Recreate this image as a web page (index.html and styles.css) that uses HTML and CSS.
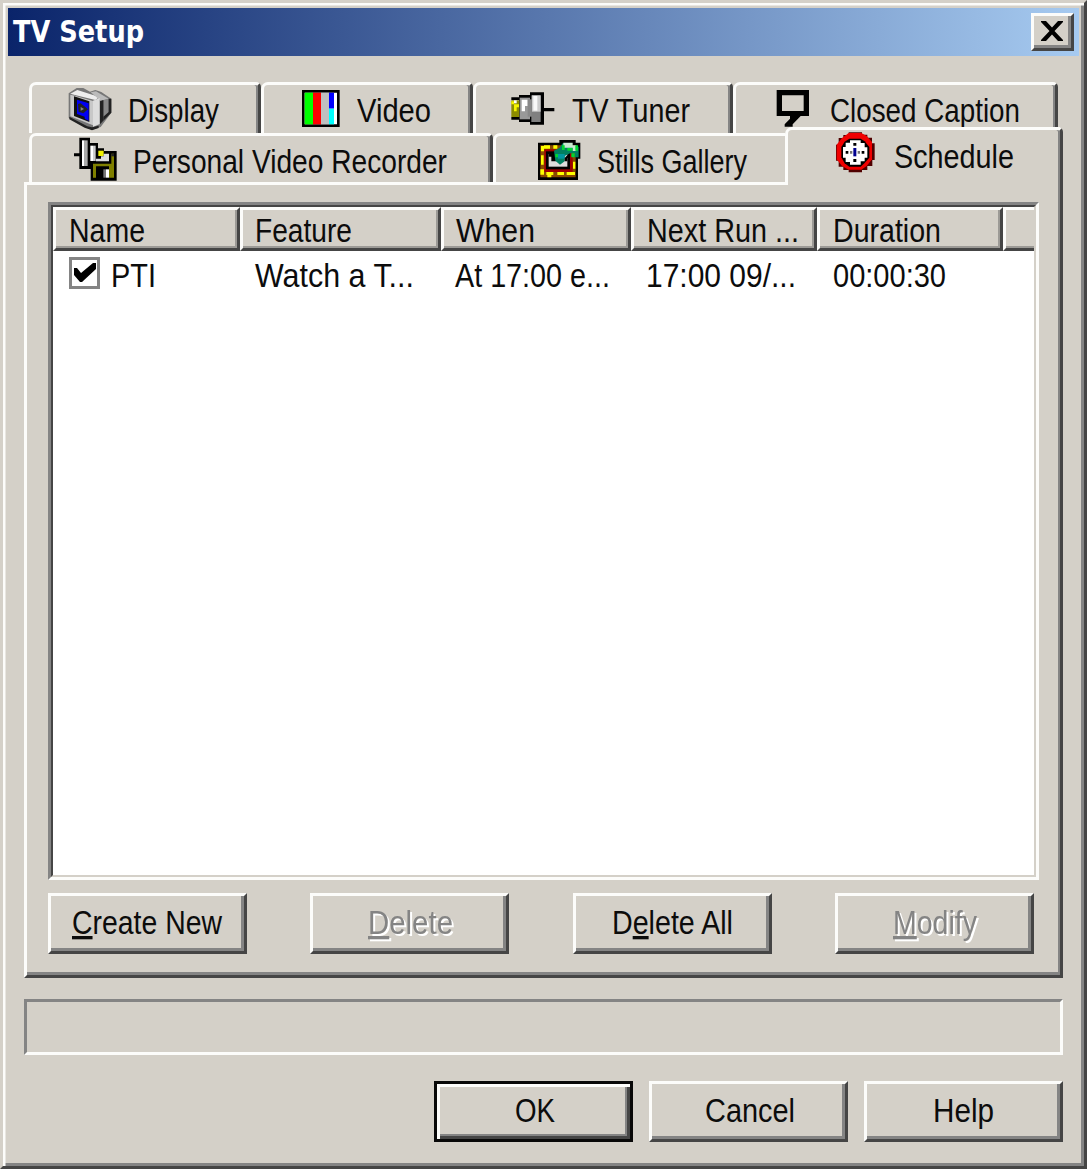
FILE: index.html
```html
<!DOCTYPE html>
<html lang="en">
<head>
<meta charset="utf-8">
<title>TV Setup</title>
<link rel="stylesheet" href="styles.css">
</head>
<body>
<main class="window">
  <header class="titlebar">
    <svg class="label title" width="131" height="44"><text x="0" y="34" textLength="131" lengthAdjust="spacingAndGlyphs">TV Setup</text></svg>
    <button class="close" aria-label="Close">
      <svg width="22" height="20" viewBox="0 0 22 20"><path d="M0 0H5L11 6.5L17 0H22V1L13.5 10L22 19V20H17L11 13.5L5 20H0V19L8.500 10L0 1Z"/></svg>
    </button>
  </header>

  <nav class="tabs">
    <div class="tab-row">
      <div class="tab t-display">
        <svg class="icon" viewBox="204 261 132 132">
          <path d="M206 280L230 264L250 264L270 275L286 270L304 276L334 296V338L302 381L276 389L256 382L206 353Z" fill="#777"/>
          <path d="M211 281L232 270L298 291L286 300L222 284Z" fill="#eee"/>
          <path d="M272 277L288 274L326 296L302 302Z" fill="#bbb"/>
          <path d="M211 284L224 287L279 303V376L211 349Z" fill="#c8c8c8"/>
          <path d="M279 302L299 294V372L279 381Z" fill="#ddd"/>
          <path d="M300 304L310 300V362L300 373Z" fill="#222"/><path d="M312 300L325 297V344L312 359Z" fill="#888"/>
          <path d="M326 296H334V338L310 362V350L326 336Z" fill="#222"/>
          <path d="M208 350L262 379L276 382L296 377V384L276 391L254 383L208 358Z" fill="#222"/>
          <path d="M222 289L268 304V366L222 348Z" fill="#111"/><path d="M231 299L266 310V362L254 356V350L231 342Z" fill="#0000f4"/>
          <path d="M234 312L242 310L256 321L264 328L250 340L236 335Z" fill="#222"/><path d="M242 321L252 327L242 332Z" fill="#888"/>
        </svg>
        <svg class="label" width="93" height="44"><text x="1" y="35" textLength="91" lengthAdjust="spacingAndGlyphs">Display</text></svg>
      </div>
      <div class="tab t-video">
        <svg class="icon" viewBox="78 51 132 132">
          <path d="M96 60H209V171H96Z"/><path d="M104 68H201V163H104Z" fill="#fff"/>
          <path d="M104 68H129V163H104Z" fill="#0f0"/><path d="M129 68H153V163H129Z" fill="#f00"/>
          <path d="M153 68H177V163H153Z" fill="#c0c0c0"/><path d="M177 68H192V116H177Z" fill="#00f"/><path d="M177 116H192V163H177Z" fill="#0ff"/>
        </svg>
        <svg class="label" width="76" height="44"><text x="2" y="35" textLength="74" lengthAdjust="spacingAndGlyphs">Video</text></svg>
      </div>
      <div class="tab t-tuner">
        <svg class="icon" viewBox="33 51 132 132">
          <path d="M34 82H57V75H90V67H132V114H163V124H132V164H90V156H57V149H34V141H57V90H34Z"/>
          <path d="M34 91H58V141H34Z" fill="#8c8c00"/><path d="M34 94H42V103H34ZM42 103H57V112H50V124H42Z" fill="#f6f600"/><path d="M42 91H50V100H42Z" fill="#fff"/>
          <path d="M59 83H90V148H59Z" fill="#999"/><path d="M65 89H83V108H75V124H65Z" fill="#fff"/><path d="M83 88H96V140H83Z" fill="#888"/>
          <path d="M94 76H122V156H94Z" fill="#808080"/><path d="M96 76H122V125H96Z" fill="#ccc"/><path d="M100 78H112V122H100Z" fill="#f8f8f8"/>
        </svg>
        <svg class="label" width="121" height="44"><text x="2" y="35" textLength="118" lengthAdjust="spacingAndGlyphs">TV Tuner</text></svg>
      </div>
      <div class="tab t-cc">
        <svg class="icon" viewBox="30 51 132 132">
          <path fill-rule="evenodd" d="M50 60H147V138H122L98 163V170H74V163L90 146V138H50ZM66 76V123H131V76Z"/>
        </svg>
        <svg class="label" width="191" height="44"><text x="1" y="35" textLength="190" lengthAdjust="spacingAndGlyphs">Closed Caption</text></svg>
      </div>
    </div>
    <div class="tab-row second">
      <div class="tab t-pvr">
        <svg class="icon" viewBox="219 411 132 132">
          <path d="M238 413H270V429H294V445H312V453H350V542H272V507H238V469H222V460H238Z"/>
          <path d="M246 421H254V498H246Z" fill="#fff"/><path d="M254 421H263V498H254Z" fill="#aaa"/>
          <path d="M271 437H279V483H271Z" fill="#fff"/><path d="M279 437H287V483H279Z" fill="#ccc"/>
          <path d="M295 452H311V468H295Z" fill="#f0f000"/><path d="M311 461H327V484H288V476H303V469H311Z" fill="#ddd"/>
          <path d="M279 491H288V533H279ZM334 461H342V533H334ZM288 491H334V499H288ZM327 499H334V533H327Z" fill="#808000"/>
          <path d="M318 508H327V533H318Z" fill="#fff"/><path d="M310 508H318V533H310Z" fill="#777"/><path d="M334 461H342V469H334Z" fill="#222"/>
        </svg>
        <svg class="label" width="315" height="44"><text x="1" y="36" textLength="314" lengthAdjust="spacingAndGlyphs">Personal Video Recorder</text></svg>
      </div>
      <div class="tab t-stills">
        <svg class="icon" viewBox="111 201 132 132">
          <path d="M114 218H178V210H227V218H241V266H234V330H114Z"/>
          <path d="M121 226H227V322H121Z" fill="#8a4a00"/>
          <path d="M123 228H132V244H123ZM132 226H150V236H132ZM160 226H172V236H160ZM123 256H131V284H123ZM121 298H132V314H121ZM139 306H160V315H139ZM172 306H192V315H172ZM200 306H225V315H200ZM219 275H226V296H219ZM142 315H154V322H142Z" fill="#ff0"/>
          <path d="M133 238H218V306H133Z" fill="#a00000"/><path d="M138 244H210V298H138Z" fill="#000"/><path d="M146 252H202V290H146Z" fill="#ddd"/>
          <path d="M146 246H162L170 258V274H154V260H146Z"/>
          <path d="M162 242L178 234L188 220H202L210 230H236V262H224V250H210L194 258V274L180 284L166 272Z" fill="#008060"/>
          <path d="M190 218H218V226H229V243H218V233H190Z" fill="#c8e8d0"/><path d="M202 234H217V242H202ZM226 226H234V242H226ZM186 226H194V240H186ZM166 252H174V262H166ZM214 250H224V262H214Z" fill="#00d830"/>
          <path d="M174 252H194V266H174Z" fill="#0098a0"/><path d="M194 264L202 256H210V264H202V274H194Z"/>
        </svg>
        <svg class="label" width="151" height="44"><text x="1" y="36" textLength="150" lengthAdjust="spacingAndGlyphs">Stills Gallery</text></svg>
      </div>
      <div class="tab active t-schedule">
        <svg class="icon" viewBox="222 186 132 132">
          <path d="M266 187H306V194H322V203H336V220H344V270H337V288H322V300H306V307H266V300H250V290H236V272H228V224H236V204H250V195H266Z" fill="#500000"/>
          <path d="M266 189H304L320 198L336 216V268L320 288L304 299H266L246 288L230 268V224L246 204Z" fill="#f00000"/>
          <path d="M268 206H302L314 214L328 231V263L313 280L302 290H268L254 280L244 262V231L254 215Z"/>
          <path d="M270 211H302V219H314V232H322V263H314V274H302V284H270V276H257V263H249V231H257V218H270Z" fill="#fff"/>
          <path d="M280 219H289V227H280ZM280 267H289V276H280ZM257 243H265V251H257ZM305 243H313V251H305Z"/>
          <path d="M270 243H277V251H270ZM293 243H300V251H293Z" fill="#777"/>
          <path d="M280 234H289V259H280Z" fill="#000090"/>
        </svg>
        <svg class="label" width="121" height="44"><text x="1" y="36" textLength="120" lengthAdjust="spacingAndGlyphs">Schedule</text></svg>
      </div>
    </div>
  </nav>

  <section class="panel">
    <div class="list">
      <div class="list-inner">
        <div class="grid head">
          <div class="th"><svg class="label" width="76" height="38"><text x="0" y="32" textLength="76" lengthAdjust="spacingAndGlyphs">Name</text></svg></div>
          <div class="th"><svg class="label" width="98" height="38"><text x="-1" y="32" textLength="97" lengthAdjust="spacingAndGlyphs">Feature</text></svg></div>
          <div class="th"><svg class="label" width="80" height="38"><text x="-1" y="32" textLength="79" lengthAdjust="spacingAndGlyphs">When</text></svg></div>
          <div class="th"><svg class="label" width="152" height="38"><text x="0" y="32" textLength="152" lengthAdjust="spacingAndGlyphs">Next Run ...</text></svg></div>
          <div class="th"><svg class="label" width="108" height="38"><text x="0" y="32" textLength="108" lengthAdjust="spacingAndGlyphs">Duration</text></svg></div>
          <div class="th last"></div>
        </div>
        <div class="grid row">
          <div class="td">
            <span class="check"><svg width="25" height="25" viewBox="0 0 25 25"><path d="M2 8H5L9 13L21 3H24V9L10 22H8L2 15Z"/></svg></span>
            <svg class="label" width="45" height="38"><text x="0" y="32" textLength="45" lengthAdjust="spacingAndGlyphs">PTI</text></svg>
          </div>
          <div class="td"><svg class="label" width="161" height="38"><text x="0" y="32" textLength="159" lengthAdjust="spacingAndGlyphs">Watch a T...</text></svg></div>
          <div class="td"><svg class="label" width="157" height="38"><text x="-1" y="32" textLength="155" lengthAdjust="spacingAndGlyphs">At 17:00 e...</text></svg></div>
          <div class="td"><svg class="label" width="150" height="38"><text x="0" y="32" textLength="150" lengthAdjust="spacingAndGlyphs">17:00 09/...</text></svg></div>
          <div class="td"><svg class="label" width="113" height="38"><text x="1" y="32" textLength="113" lengthAdjust="spacingAndGlyphs">00:00:30</text></svg></div>
        </div>
      </div>
    </div>
    <div class="actions">
      <button class="btn"><svg class="label" width="151" height="44"><text x="0" y="35" textLength="150" lengthAdjust="spacingAndGlyphs"><tspan class="key">C</tspan>reate New</text></svg></button>
      <button class="btn" disabled><svg class="label" width="86" height="44"><text x="1" y="35" textLength="85" lengthAdjust="spacingAndGlyphs"><tspan class="key">D</tspan>elete</text></svg></button>
      <button class="btn"><svg class="label" width="122" height="44"><text x="1" y="35" textLength="121" lengthAdjust="spacingAndGlyphs">D<tspan class="key">e</tspan>lete All</text></svg></button>
      <button class="btn" disabled><svg class="label" width="85" height="44"><text x="1" y="35" textLength="84" lengthAdjust="spacingAndGlyphs"><tspan class="key">M</tspan>odify</text></svg></button>
    </div>
  </section>

  <div class="status"></div>

  <footer class="dialog-buttons">
    <button class="btn default"><svg class="label" width="40" height="44"><text x="1" y="35" textLength="40" lengthAdjust="spacingAndGlyphs">OK</text></svg></button>
    <button class="btn"><svg class="label" width="90" height="44"><text x="1" y="35" textLength="90" lengthAdjust="spacingAndGlyphs">Cancel</text></svg></button>
    <button class="btn"><svg class="label" width="61" height="44"><text x="0" y="35" textLength="61" lengthAdjust="spacingAndGlyphs">Help</text></svg></button>
  </footer>
</main>
</body>
</html>
```
FILE: styles.css
```css
:root {
  --face: #d4d0c8;
  --light: #fcfcfa;
  --shadow: #848484;
  --dark: #454545;
}
* { box-sizing: border-box; }
body {
  margin: 0;
  background: var(--face);
  font-family: "Liberation Sans", Arial, sans-serif;
  font-size: 33px;
}
svg { display: block; flex: none; }
.window {
  width: 1087px;
  height: 1169px;
  padding: 5px 8px 0 5px;
  border: 3px solid;
  border-color: var(--face) var(--dark) var(--dark) var(--face);
  background: var(--face);
  box-shadow: inset 2.5px 2.5px 0 var(--light), inset -3px -3px 0 var(--shadow);
}
.label { overflow: visible; fill: #0c0c0c; }
.label .key { text-decoration: underline; text-decoration-thickness: 3px; text-underline-offset: 2px; }
.icon { width: 44px; height: 44px; }

.titlebar {
  display: flex;
  justify-content: space-between;
  align-items: flex-start;
  width: 1071px;
  height: 48px;
  padding: 5px 5px 0;
  background: linear-gradient(90deg, #0a246a, #a6caf0);
}
.title { margin-top: -5px; fill: #fff; font: bold 30px "DejaVu Sans", sans-serif; }
.close {
  display: flex;
  align-items: flex-start;
  justify-content: center;
  width: 43px;
  height: 38px;
  padding: 5px 1px 0 0;
  border: 3px solid;
  border-color: var(--light) var(--dark) var(--dark) var(--light);
  background: var(--face);
  box-shadow: inset -3px -3px 0 var(--shadow);
}

.tabs { margin: 26px 0 0 16px; width: 1039px; }
.tab-row { display: flex; padding-left: 5px; height: 51px; }
.tab-row.second { height: 49px; }
.tab {
  display: flex;
  align-items: flex-start;
  gap: 15px;
  padding-top: 2px;
  border: 3px solid;
  border-color: var(--light) var(--dark) transparent var(--light);
  border-bottom: 0;
  border-radius: 7px 5px 0 0;
  box-shadow: inset -2px 0 0 var(--shadow);
}
.second .tab { padding-top: 1px; }
.t-display { width: 232px; padding-left: 36px; }
.t-video { width: 212px; padding-left: 32px; }
.t-tuner { width: 260px; padding-left: 35px; }
.t-cc { width: 325px; padding-left: 34px; }
.second .t-pvr { width: 464px; padding-left: 41px; }
.second .t-stills { width: 292px; padding-left: 41px; border-right: 0; border-radius: 7px 0 0 0; box-shadow: none; }
.second .t-schedule {
  position: relative;
  width: 278px;
  height: 58px;
  margin-top: -6px;
  padding: 2px 0 0 46px;
  background: var(--face);
}

.panel {
  width: 1039px;
  height: 796px;
  margin-left: 16px;
  padding: 17px 22px 0 21px;
  border: 3px solid;
  border-color: var(--light) var(--dark) var(--dark) var(--light);
  box-shadow: inset -2px -3px 0 var(--shadow);
}
.list {
  width: 991px;
  height: 678px;
  border: 3px solid;
  border-color: var(--shadow) var(--light) var(--light) var(--shadow);
}
.list-inner {
  height: 100%;
  border: 2px solid;
  border-color: var(--dark) var(--face) var(--face) var(--dark);
  background: #fff;
}
.grid { display: grid; grid-template-columns: 187px 201px 190px 186px 186px 31px; }
.th {
  height: 44px;
  padding-left: 13px;
  border: 3px solid;
  border-color: var(--light) var(--dark) var(--dark) var(--light);
  background: var(--face);
  box-shadow: inset -2px -2px 0 #9c9a96;
}
.th.last { border-right: 0; box-shadow: inset 0 -2px 0 #9c9a96; }
.row { padding-top: 4px; }
.td { display: flex; padding-left: 15px; }
.td:first-child { padding-left: 16px; }
.check {
  width: 31px;
  height: 32px;
  margin: 2px 11px 0 0;
  border: 3px solid var(--shadow);
  background: #fff;
}
.actions { display: flex; justify-content: space-between; width: 986px; margin-top: 13px; }
.btn {
  display: flex;
  align-items: flex-start;
  justify-content: center;
  width: 199px;
  height: 61px;
  padding: 3px 0 0;
  border: 3px solid;
  border-color: var(--light) var(--dark) var(--dark) var(--light);
  background: var(--face);
  box-shadow: inset -3px -3px 0 var(--shadow);
  font: inherit;
}
.btn:disabled .label { fill: #848484; filter: drop-shadow(2.6px 2.6px 0 #fff); }
.btn.default {
  border-color: #080808;
  box-shadow: inset 3px 3px 0 var(--light), inset -3px -3px 0 var(--dark), inset -5px -5px 0 var(--shadow);
}
.status {
  width: 1039px;
  height: 56px;
  margin: 21px 0 0 16px;
  border: 3px solid;
  border-color: var(--shadow) var(--light) var(--light) var(--shadow);
}
.dialog-buttons { display: flex; justify-content: flex-end; gap: 16px; width: 1055px; margin-top: 26px; }
```
